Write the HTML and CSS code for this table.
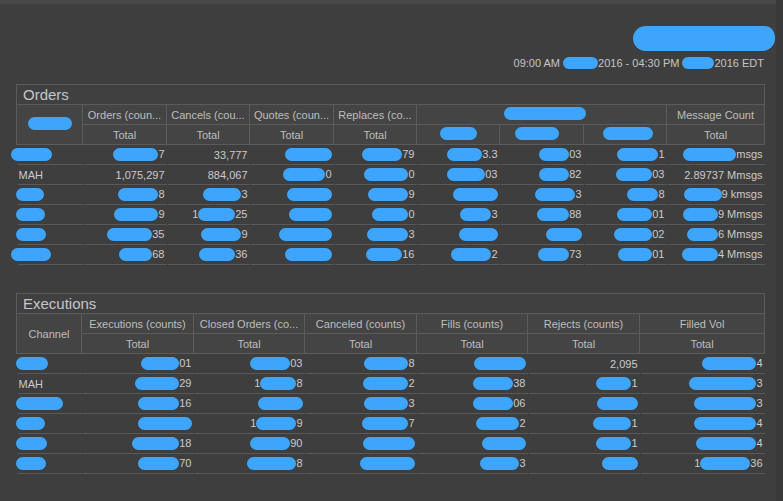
FILE: index.html
```html
<!DOCTYPE html>
<html>
<head>
<meta charset="utf-8">
<title>Orders / Executions</title>
<link rel="stylesheet" href="styles.css">
</head>
<body>
<div class="page">
  <main class="main">
    <div class="topband"></div>
    <div class="sheet">
      <div class="headline"><i class="r big"></i></div>
      <div class="range">09:00 AM <i class="r" style="width:35px"></i>2016 - 04:30 PM <i class="r" style="width:32px"></i>2016 EDT</div>

      <table class="grid orders">
        <colgroup><col class="w66"><col class="w84"><col class="w83"><col class="w84"><col class="w83"><col class="w83"><col class="w84"><col class="w83"><col class="w98"></colgroup>
        <tr><th class="title" colspan="9">Orders</th></tr>
        <tr>
          <th rowspan="2"><i class="r" style="width:44px"></i></th>
          <th>Orders (coun...</th><th>Cancels (cou...</th><th>Quotes (coun...</th><th>Replaces (co...</th>
          <th colspan="3"><i class="r off" style="width:82px"></i></th>
          <th>Message Count</th>
        </tr>
        <tr>
          <th>Total</th><th>Total</th><th>Total</th><th>Total</th>
          <th><i class="r" style="width:37px"></i></th><th><i class="r lft" style="width:44px"></i></th><th><i class="r rgt" style="width:50px"></i></th>
          <th>Total</th>
        </tr>
        <tr>
          <td class="ch"><i class="r out" style="width:41px"></i></td>
          <td><i class="r" style="width:45px"></i>7</td>
          <td>33,777</td>
          <td><i class="r" style="width:47px"></i></td>
          <td><i class="r" style="width:40px"></i>79</td>
          <td><i class="r" style="width:35px"></i>3.3</td>
          <td><i class="r" style="width:30px"></i>03</td>
          <td><i class="r" style="width:41px"></i>1</td>
          <td><i class="r" style="width:53px"></i>msgs</td>
        </tr>
        <tr>
          <td class="ch">MAH</td>
          <td>1,075,297</td>
          <td>884,067</td>
          <td><i class="r" style="width:42px"></i>0</td>
          <td><i class="r" style="width:44px"></i>0</td>
          <td><i class="r" style="width:38px"></i>03</td>
          <td><i class="r" style="width:30px"></i>82</td>
          <td><i class="r" style="width:36px"></i>03</td>
          <td>2.89737 Mmsgs</td>
        </tr>
        <tr>
          <td class="ch"><i class="r in" style="width:28px"></i></td>
          <td><i class="r" style="width:40px"></i>8</td>
          <td><i class="r" style="width:38px"></i>3</td>
          <td><i class="r" style="width:45px"></i></td>
          <td><i class="r" style="width:40px"></i>9</td>
          <td><i class="r" style="width:45px"></i></td>
          <td><i class="r" style="width:40px"></i>3</td>
          <td><i class="r" style="width:31px"></i>8</td>
          <td><i class="r" style="width:38px"></i>9 kmsgs</td>
        </tr>
        <tr>
          <td class="ch"><i class="r in" style="width:29px"></i></td>
          <td><i class="r" style="width:44px"></i>9</td>
          <td>1<i class="r" style="width:37px"></i>25</td>
          <td><i class="r" style="width:43px"></i></td>
          <td><i class="r" style="width:36px"></i>0</td>
          <td><i class="r" style="width:31px"></i>3</td>
          <td><i class="r" style="width:32px"></i>88</td>
          <td><i class="r" style="width:35px"></i>01</td>
          <td><i class="r" style="width:35px"></i>9 Mmsgs</td>
        </tr>
        <tr>
          <td class="ch"><i class="r in" style="width:30px"></i></td>
          <td><i class="r" style="width:45px"></i>35</td>
          <td><i class="r" style="width:40px"></i>9</td>
          <td><i class="r" style="width:53px"></i></td>
          <td><i class="r" style="width:41px"></i>3</td>
          <td><i class="r" style="width:39px"></i></td>
          <td><i class="r" style="width:36px"></i></td>
          <td><i class="r" style="width:38px"></i>02</td>
          <td><i class="r" style="width:31px"></i>6 Mmsgs</td>
        </tr>
        <tr>
          <td class="ch"><i class="r out" style="width:40px"></i></td>
          <td><i class="r" style="width:33px"></i>68</td>
          <td><i class="r" style="width:36px"></i>36</td>
          <td><i class="r" style="width:47px"></i></td>
          <td><i class="r" style="width:36px"></i>16</td>
          <td><i class="r" style="width:40px"></i>2</td>
          <td><i class="r" style="width:31px"></i>73</td>
          <td><i class="r" style="width:34px"></i>01</td>
          <td><i class="r" style="width:36px"></i>4 Mmsgs</td>
        </tr>
      </table>

      <table class="grid execs">
        <colgroup><col class="w65"><col class="w112"><col class="w111"><col class="w112"><col class="w111"><col class="w112"><col class="w125"></colgroup>
        <tr><th class="title" colspan="7">Executions</th></tr>
        <tr>
          <th rowspan="2">Channel</th>
          <th>Executions (counts)</th><th>Closed Orders (co...</th><th>Canceled (counts)</th><th>Fills (counts)</th><th>Rejects (counts)</th><th>Filled Vol</th>
        </tr>
        <tr><th>Total</th><th>Total</th><th>Total</th><th>Total</th><th>Total</th><th>Total</th></tr>
        <tr>
          <td class="ch"><i class="r in" style="width:32px"></i></td>
          <td><i class="r" style="width:38px"></i>01</td>
          <td><i class="r" style="width:40px"></i>03</td>
          <td><i class="r" style="width:44px"></i>8</td>
          <td><i class="r" style="width:52px"></i></td>
          <td>2,095</td>
          <td><i class="r" style="width:54px"></i>4</td>
        </tr>
        <tr>
          <td class="ch">MAH</td>
          <td><i class="r" style="width:44px"></i>29</td>
          <td>1<i class="r" style="width:36px"></i>8</td>
          <td><i class="r" style="width:45px"></i>2</td>
          <td><i class="r" style="width:40px"></i>38</td>
          <td><i class="r" style="width:35px"></i>1</td>
          <td><i class="r" style="width:67px"></i>3</td>
        </tr>
        <tr>
          <td class="ch"><i class="r in" style="width:47px"></i></td>
          <td><i class="r" style="width:41px"></i>16</td>
          <td><i class="r" style="width:45px"></i></td>
          <td><i class="r" style="width:44px"></i>3</td>
          <td><i class="r" style="width:40px"></i>06</td>
          <td><i class="r" style="width:41px"></i></td>
          <td><i class="r" style="width:62px"></i>3</td>
        </tr>
        <tr>
          <td class="ch"><i class="r in" style="width:29px"></i></td>
          <td><i class="r" style="width:54px"></i></td>
          <td>1<i class="r" style="width:40px"></i>9</td>
          <td><i class="r" style="width:46px"></i>7</td>
          <td><i class="r" style="width:43px"></i>2</td>
          <td><i class="r" style="width:38px"></i>1</td>
          <td><i class="r" style="width:62px"></i>4</td>
        </tr>
        <tr>
          <td class="ch"><i class="r in" style="width:31px"></i></td>
          <td><i class="r" style="width:47px"></i>18</td>
          <td><i class="r" style="width:40px"></i>90</td>
          <td><i class="r" style="width:52px"></i></td>
          <td><i class="r" style="width:44px"></i></td>
          <td><i class="r" style="width:35px"></i>1</td>
          <td><i class="r" style="width:60px"></i>4</td>
        </tr>
        <tr>
          <td class="ch"><i class="r in" style="width:30px"></i></td>
          <td><i class="r" style="width:41px"></i>70</td>
          <td><i class="r" style="width:49px"></i>8</td>
          <td><i class="r" style="width:55px"></i></td>
          <td><i class="r" style="width:39px"></i>3</td>
          <td><i class="r" style="width:36px"></i></td>
          <td>1<i class="r" style="width:50px"></i>36</td>
        </tr>
      </table>
    </div>
  </main>
  <div class="rail"></div>
</div>
</body>
</html>
```
FILE: styles.css
```css
html, body {
  margin: 0;
  padding: 0;
}
body {
  background: #3e3e3e;
  font-family: "Liberation Sans", Arial, sans-serif;
  color: #c8c8c8;
}
.page {
  display: flex;
  width: 783px;
  height: 501px;
  overflow: hidden;
}
.main {
  flex: 1;
  min-width: 0;
}
.rail {
  width: 7px;
  background: #393939;
}
.topband {
  height: 5px;
  background: linear-gradient(#494949, #464646 60%, #3f3f3f);
}
.sheet {
  width: 748px;
  margin-left: 16px;
}
.headline {
  display: flex;
  justify-content: flex-end;
  padding-top: 22px;
  margin-right: -11px;
}
.r {
  display: inline-block;
  height: 13px;
  border-radius: 7px;
  background: #3ea5fc;
  vertical-align: middle;
  position: relative;
  top: -1px;
}
.r.big {
  width: 142px;
  height: 25px;
  border-radius: 13px 11px 13px 13px;
}
.range {
  margin-top: 4px;
  height: 14px;
  line-height: 14px;
  text-align: right;
  font-size: 11px;
  color: #c4c4c4;
  white-space: nowrap;
}
.range .r {
  height: 12px;
  border-radius: 6px;
}

.grid {
  border-collapse: collapse;
  table-layout: fixed;
  width: 748px;
  font-size: 11px;
}
.orders {
  margin-top: 14px;
}
.execs {
  margin-top: 28px;
}
.grid th {
  border: 1px solid #5b5b5b;
  background: #444444;
  color: #bebebe;
  font-weight: normal;
  height: 19px;
  padding: 0 2px;
  text-align: center;
  white-space: nowrap;
  overflow: hidden;
}
.grid th.title {
  background: #404040;
  font-size: 15px;
  color: #c6c6c6;
  text-align: left;
  padding-left: 6px;
  height: 19px;
}
.grid td {
  height: 20px;
  padding: 0 2px 0 2px;
  text-align: right;
  white-space: nowrap;
  color: #cacaca;
  background-image: linear-gradient(#595959, #595959);
  background-size: calc(100% - 1px) 1px;
  background-position: right bottom;
  background-repeat: no-repeat;
  overflow: visible;
}
.grid td.ch {
  text-align: left;
}
.r.out {
  margin-left: -8px;
}
.r.in {
  margin-left: -3px;
}
.r.off {
  left: 3px;
}
.r.lft {
  left: -5px;
}
.r.rgt {
  left: 3px;
}

.w65 { width: 65px; }
.w66 { width: 66px; }
.w83 { width: 83px; }
.w84 { width: 84px; }
.w98 { width: 98px; }
.w111 { width: 111px; }
.w112 { width: 112px; }
.w125 { width: 125px; }
```
